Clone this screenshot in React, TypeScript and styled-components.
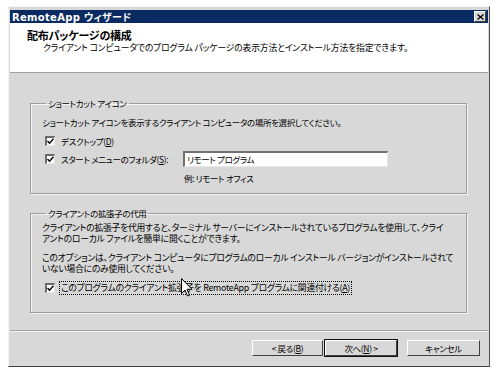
import React from "react";
import styled, { createGlobalStyle, css } from "styled-components";

const GlobalStyle = createGlobalStyle`
  html, body {
    margin: 0;
    padding: 0;
    background: #ffffff;
  }
  body {
    font-family: "Noto Sans CJK JP", "Liberation Sans", sans-serif;
    font-feature-settings: "palt";
    font-size: 8.5px;
    letter-spacing: -0.35px;
    color: #000;
  }
`;

// the second group's lines run a little wider in the original
const loose = css`
  font-size: 8.8px;
  letter-spacing: -0.25px;
`;

const Page = styled.div`
  padding: 6px 0 0 8px;
`;

const Window = styled.div`
  position: relative;
  box-sizing: border-box;
  width: 482px;
  height: 361px;
  background: #d8d8d8;
  border-left: 1px solid #f4f4f4;
  border-top: 1px solid #f4f4f4;
  border-right: 1px solid #505050;
  border-bottom: 1px solid #404040;
  padding: 3px 1px 0 1px;
  display: flex;
  flex-direction: column;
`;

const TitleBar = styled.div`
  height: 13px;
  background: #0a2b62;
  display: flex;
  align-items: center;
  justify-content: space-between;
  padding: 0 2px 0 2px;
`;

const TitleText = styled.span`
  font-family: "DejaVu Sans", "Noto Sans CJK JP", sans-serif;
  font-weight: bold;
  font-size: 10px;
  color: #ffffff;
  letter-spacing: 0.3px;
`;

const CloseButton = styled.div`
  box-sizing: border-box;
  width: 12px;
  height: 11px;
  background: #d8d8d8;
  border-top: 1px solid #ffffff;
  border-left: 1px solid #ffffff;
  border-right: 1px solid #404040;
  border-bottom: 1px solid #404040;
  display: flex;
  align-items: center;
  justify-content: center;
`;

const Header = styled.div`
  box-sizing: border-box;
  height: 50px;
  background: #ffffff;
  border-bottom: 1px solid #a0a0a0;
  padding: 6px 0 0 17px;
`;

const Heading = styled.div`
  font-weight: bold;
  font-size: 11px;
  letter-spacing: -0.2px;
  line-height: 12px;
`;

const SubHeading = styled.div`
  font-size: 8.8px;
  letter-spacing: -0.15px;
  line-height: 12px;
  margin: 1px 0 0 16px;
  white-space: nowrap;
`;

const Body = styled.div`
  flex: 1;
  padding: 0 21px 0 20px;
  display: flex;
  flex-direction: column;
`;

const GroupBox = styled.fieldset<{ $top: number; $height: number }>`
  box-sizing: border-box;
  margin: ${({ $top }) => $top}px 0 0 0;
  height: ${({ $height }) => $height}px;
  padding: 0 10px 0 11px;
  border: 1px solid #9c9c9c;
  box-shadow: 1px 1px 0 #f4f4f4, inset 1px 1px 0 #f4f4f4;
  min-width: 0;
`;

const Legend = styled.legend`
  line-height: 12px;
  padding: 0 2px;
  margin-left: 4px;
`;

const Paragraph = styled.p<{ $mt: number; $loose?: boolean }>`
  margin: ${({ $mt }) => $mt}px 0 0 0;
  line-height: 11px;
  white-space: nowrap;
  ${({ $loose }) => $loose && loose}
`;

const CheckRow = styled.div<{ $mt: number }>`
  display: flex;
  align-items: center;
  height: 16px;
  margin-top: ${({ $mt }) => $mt}px;
  padding-left: 3px;
  gap: 5px;
  white-space: nowrap;
`;

const CheckBox = styled.span`
  box-sizing: border-box;
  width: 10px;
  height: 10px;
  background: #ffffff;
  border-top: 2px solid #6a6a6a;
  border-left: 2px solid #6a6a6a;
  border-right: 1px solid #e8e8e8;
  border-bottom: 1px solid #e8e8e8;
  display: flex;
  align-items: center;
  justify-content: center;
  flex-shrink: 0;
`;

const Label = styled.span<{ $focused?: boolean; $width?: number; $loose?: boolean }>`
  line-height: 12px;
  padding: 0 1px;
  width: ${({ $width }) => ($width ? `${$width}px` : "auto")};
  outline: ${({ $focused }) => ($focused ? "1px dotted #000" : "none")};
  ${({ $loose }) => $loose && loose}
`;

const TextInput = styled.div`
  box-sizing: border-box;
  width: 205px;
  height: 16px;
  background: #ffffff;
  border-top: 2px solid #707070;
  border-left: 2px solid #707070;
  border-right: 1px solid #e8e8e8;
  border-bottom: 1px solid #e8e8e8;
  padding-left: 2px;
  line-height: 12px;
`;

const Example = styled.div`
  margin: 5px 0 0 142px;
  line-height: 12px;
`;

const Footer = styled.div`
  box-sizing: border-box;
  height: 36px;
  border-top: 1px solid #a0a0a0;
  box-shadow: inset 0 1px 0 #f4f4f4;
  display: flex;
  justify-content: flex-end;
  align-items: flex-start;
  padding: 9px 8px 0 0;
`;

const Button = styled.div<{ $width: number; $primary?: boolean; $ml?: number }>`
  box-sizing: border-box;
  width: ${({ $width }) => $width}px;
  height: 16px;
  margin-left: ${({ $ml }) => $ml ?? 0}px;
  background: #d8d8d8;
  border-top: 1px solid #ffffff;
  border-left: 1px solid #ffffff;
  border-right: 1px solid #404040;
  border-bottom: 1px solid #404040;
  outline: ${({ $primary }) => ($primary ? "1px solid #101010" : "none")};
  display: flex;
  align-items: center;
  justify-content: center;
  line-height: 12px;
`;

const Cursor = styled.svg`
  position: absolute;
  left: 172px;
  top: 271px;
`;

const Check = () => (
  <svg width="7" height="7" viewBox="0 0 7 7">
    <path d="M0.5 3 L2.5 5.2 L6.5 0.8" stroke="#000" strokeWidth="1.4" fill="none" />
  </svg>
);

const App: React.FC = () => {
  return (
    <>
      <GlobalStyle />
      <Page>
        <Window>
          <TitleBar>
            <TitleText>RemoteApp ウィザード</TitleText>
            <CloseButton>
              <svg width="7" height="6" viewBox="0 0 7 6">
                <path d="M0.5 0.5 L6.5 5.5 M6.5 0.5 L0.5 5.5" stroke="#000" strokeWidth="1.3" />
              </svg>
            </CloseButton>
          </TitleBar>
          <Header>
            <Heading>配布パッケージの構成</Heading>
            <SubHeading>
              クライアント コンピュータでのプログラム パッケージの表示方法とインストール方法を指定できます。
            </SubHeading>
          </Header>
          <Body>
            <GroupBox $top={24} $height={97}>
              <Legend>ショートカット アイコン</Legend>
              <Paragraph $mt={8}>
                ショートカット アイコンを表示するクライアント コンピュータの場所を選択してください。
              </Paragraph>
              <CheckRow $mt={5}>
                <CheckBox>
                  <Check />
                </CheckBox>
                <Label>
                  デスクトップ(<u>D</u>)
                </Label>
              </CheckRow>
              <CheckRow $mt={2}>
                <CheckBox>
                  <Check />
                </CheckBox>
                <Label $width={116}>
                  スタート メニューのフォルダ(<u>S</u>):
                </Label>
                <TextInput>リモート プログラム</TextInput>
              </CheckRow>
              <Example>例: リモート オフィス</Example>
            </GroupBox>
            <GroupBox $top={13} $height={106}>
              <Legend>クライアントの拡張子の代用</Legend>
              <Paragraph $mt={3} $loose>
                クライアントの拡張子を代用すると、ターミナル サーバーにインストールされているプログラムを使用して、クライ
                <br />
                アントのローカル ファイルを簡単に開くことができます。
              </Paragraph>
              <Paragraph $mt={8} $loose>
                このオプションは、クライアント コンピュータにプログラムのローカル インストール バージョンがインストールされて
                <br />
                いない場合にのみ使用してください。
              </Paragraph>
              <CheckRow $mt={6}>
                <CheckBox>
                  <Check />
                </CheckBox>
                <Label $focused $loose>
                  このプログラムのクライアント拡張子を RemoteApp プログラムに関連付ける(<u>A</u>)
                </Label>
              </CheckRow>
            </GroupBox>
            <div style={{ flex: 1 }} />
          </Body>
          <Footer>
            <Button $width={71}>
              &lt; 戻る(<u>B</u>)
            </Button>
            <Button $width={72} $primary $ml={2}>
              次へ(<u>N</u>) &gt;
            </Button>
            <Button $width={73} $ml={10}>
              キャンセル
            </Button>
          </Footer>
          <Cursor width="12" height="20" viewBox="0 0 12 20">
            <path
              d="M0.5 0.5 L0.5 15.5 L4 12 L6.5 18 L8.5 17.2 L6 11.3 L11 11.3 Z"
              fill="#ffffff"
              stroke="#000000"
              strokeWidth="1"
            />
          </Cursor>
        </Window>
      </Page>
    </>
  );
};

export default App;
